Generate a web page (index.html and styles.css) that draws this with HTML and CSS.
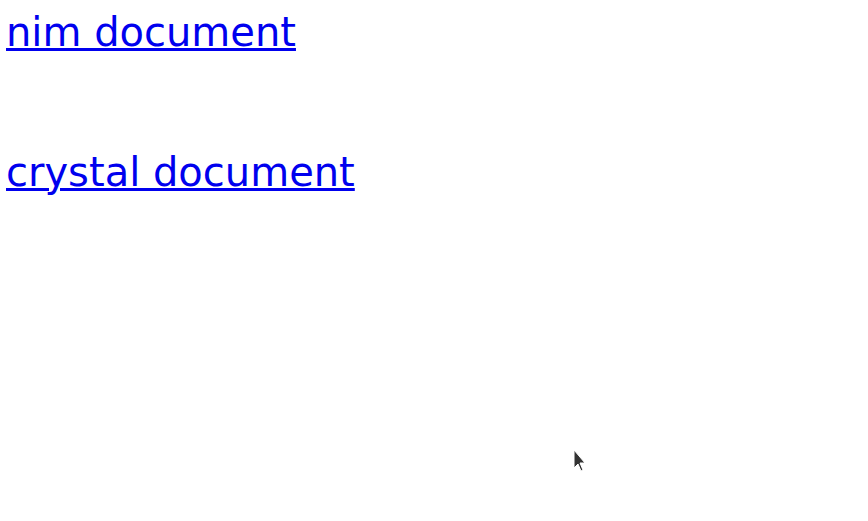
FILE: index.html
```html
<!DOCTYPE html>
<html>
<head>
<meta charset="utf-8">
<link rel="stylesheet" href="styles.css">
</head>
<body>
<div class="links">
  <a class="doc-link" href="#">nim document</a>
  <a class="doc-link" href="#">crystal document</a>
</div>
<svg class="cursor" width="14" height="24" viewBox="0 0 14 24"><path d="M1 1 L1 19 L5 15 L8 22 L10 21 L7 14 L12 14 Z" fill="#333" stroke="#fff" stroke-width="1"/></svg>
</body>
</html>
```
FILE: styles.css
```css
html, body { margin: 0; padding: 0; background: #fff; }
body { padding: 0 6px; }
.links {
  display: flex;
  flex-direction: column;
  align-items: flex-start;
  gap: 90px;
  padding-top: 7px;
}
.doc-link {
  font-family: "DejaVu Sans", sans-serif;
  font-size: 40px;
  line-height: 50px;
  color: #0000ee;
  text-decoration: underline;
  text-decoration-thickness: 3px;
  text-underline-offset: 2px;
}
.cursor {
  position: absolute;
  left: 573px;
  top: 449px;
}
```
